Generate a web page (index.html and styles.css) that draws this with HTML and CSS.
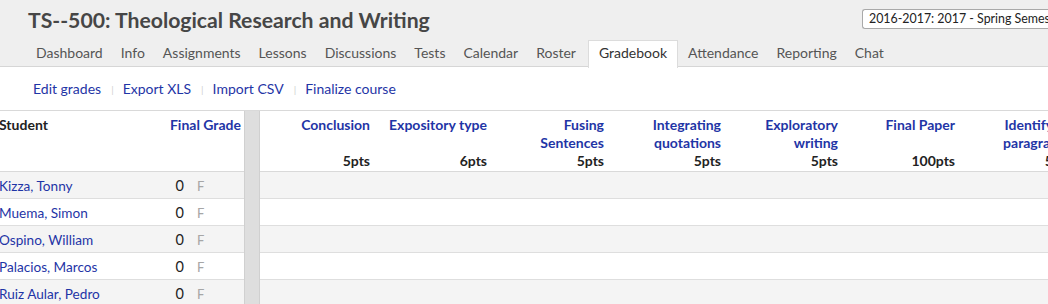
FILE: index.html
```html
<!DOCTYPE html>
<html>
<head>
<meta charset="utf-8">
<link rel="stylesheet" href="styles.css">
</head>
<body>
<header class="top">
  <div class="title-row">
    <h1 class="title">TS--500: Theological Research and Writing</h1>
    <div class="term-select">2016-2017: 2017 - Spring Semester</div>
  </div>
  <nav class="tabs">
    <a class="tab">Dashboard</a>
    <a class="tab">Info</a>
    <a class="tab">Assignments</a>
    <a class="tab">Lessons</a>
    <a class="tab">Discussions</a>
    <a class="tab">Tests</a>
    <a class="tab">Calendar</a>
    <a class="tab">Roster</a>
    <a class="tab active">Gradebook</a>
    <a class="tab">Attendance</a>
    <a class="tab">Reporting</a>
    <a class="tab">Chat</a>
  </nav>
</header>
<div class="actions">
  <a class="action">Edit grades</a><span class="sep">|</span>
  <a class="action">Export XLS</a><span class="sep">|</span>
  <a class="action">Import CSV</a><span class="sep">|</span>
  <a class="action">Finalize course</a>
</div>
<div class="grid">
  <div class="left">
    <div class="lhead">
      <div class="col-student">Student</div>
      <div class="col-final">Final Grade</div>
    </div>
    <div class="lrow odd"><a class="sname">Kizza, Tonny</a><span class="score">0</span><span class="letter">F</span></div>
    <div class="lrow"><a class="sname">Muema, Simon</a><span class="score">0</span><span class="letter">F</span></div>
    <div class="lrow odd"><a class="sname">Ospino, William</a><span class="score">0</span><span class="letter">F</span></div>
    <div class="lrow"><a class="sname">Palacios, Marcos</a><span class="score">0</span><span class="letter">F</span></div>
    <div class="lrow odd"><a class="sname">Ruiz Aular, Pedro</a><span class="score">0</span><span class="letter">F</span></div>
  </div>
  <div class="divider"></div>
  <div class="right">
    <div class="rhead">
      <div class="acol"><span class="aname">Conclusion</span><span class="pts">5pts</span></div>
      <div class="acol"><span class="aname">Expository type</span><span class="pts">6pts</span></div>
      <div class="acol"><span class="aname">Fusing Sentences</span><span class="pts">5pts</span></div>
      <div class="acol"><span class="aname">Integrating quotations</span><span class="pts">5pts</span></div>
      <div class="acol"><span class="aname">Exploratory writing</span><span class="pts">5pts</span></div>
      <div class="acol"><span class="aname">Final Paper</span><span class="pts">100pts</span></div>
      <div class="acol"><span class="aname">Identifying paragraphs</span><span class="pts">5pts</span></div>
    </div>
    <div class="rrow odd"></div>
    <div class="rrow"></div>
    <div class="rrow odd"></div>
    <div class="rrow"></div>
    <div class="rrow odd"></div>
  </div>
</div>
</body>
</html>
```
FILE: styles.css
```css
html, body {
  margin: 0;
  padding: 0;
  background: #fff;
  font-family: Lato, "Liberation Sans", sans-serif;
  overflow: hidden;
  width: 1048px;
  height: 304px;
}
a { cursor: pointer; }

.top {
  background: #efefef;
  border-bottom: 1px solid #d6d6d6;
  height: 67px;
  box-sizing: border-box;
}
.title-row {
  display: flex;
  justify-content: space-between;
  align-items: flex-start;
  height: 40px;
}
.title {
  margin: 7px 0 0 28px;
  font-size: 21.2px;
  font-weight: 700;
  color: #464646;
  line-height: 26px;
  white-space: nowrap;
}
.term-select {
  margin: 9px 0 0 0;
  width: 200px;
  flex: none;
  height: 20px;
  box-sizing: border-box;
  border: 1px solid #a9a9a9;
  border-right: none;
  border-radius: 3px 0 0 3px;
  background: #fff;
  font-size: 12.4px;
  line-height: 18px;
  padding-left: 6px;
  color: #222;
  white-space: nowrap;
  overflow: hidden;
  position: relative;
  left: 14px;
}
.tabs {
  display: flex;
  padding-left: 27px;
  height: 27px;
}
.tab {
  display: block;
  padding: 3px 9px 0;
  height: 27px;
  box-sizing: border-box;
  font-size: 14px;
  line-height: 20px;
  color: #555;
}
.tab.active {
  background: #fff;
  border: 1px solid #dcdcdc;
  border-bottom: none;
  color: #333;
  height: 28px;
  padding: 2px 10px 0;
  margin: 0 1px 0 3px;
}

.actions {
  display: flex;
  align-items: center;
  height: 44px;
  padding-left: 33px;
  border-bottom: 1px solid #d9d9d9;
  box-sizing: border-box;
}
.action {
  font-size: 14px;
  color: #1f35a6;
}
.sep {
  color: #d0d0d0;
  font-size: 10px;
  margin: 0 9px 0 10px;
}

.grid {
  display: flex;
}
.left {
  width: 245px;
  flex: none;
  margin-left: -1px;
}
.divider {
  width: 14px;
  flex: none;
  background: #dedede;
  border-left: 1px solid #d0d0d0;
  border-right: 1px solid #d0d0d0;
  height: 200px;
}
.right {
  flex: 1;
  overflow: hidden;
}
.lhead, .rhead {
  height: 61px;
  box-sizing: border-box;
  border-bottom: 1px solid #d9d9d9;
  font-size: 14px;
  font-weight: 700;
  line-height: 18px;
}
.lhead {
  display: flex;
  padding-top: 5px;
}
.col-student {
  color: #222;
  flex: 1;
}
.col-final {
  color: #1f35a6;
  padding-right: 3px;
}
.lrow, .rrow {
  height: 27px;
  box-sizing: border-box;
  border-bottom: 1px solid #dedede;
  font-size: 14px;
}
.odd { background: #f4f4f4; }
.lrow {
  display: flex;
  align-items: center;
  padding-top: 1px;
}
.sname {
  color: #1f35a6;
  flex: 1;
  font-size: 13.6px;
}
.score {
  color: #222;
  width: 30px;
  text-align: right;
  margin-right: 13px;
  font-size: 14.5px;
}
.letter {
  color: #a6a6a6;
  width: 47px;
  font-size: 13px;
}
.rhead {
  display: flex;
  padding-top: 5px;
  white-space: nowrap;
}
.acol {
  width: 117px;
  flex: none;
  box-sizing: border-box;
  padding-right: 7px;
  display: flex;
  flex-direction: column;
  justify-content: space-between;
  align-items: flex-end;
  text-align: right;
  height: 54px;
}
.aname {
  color: #1f35a6;
  white-space: normal;
  width: 100px;
}
.pts {
  color: #222;
}
```
